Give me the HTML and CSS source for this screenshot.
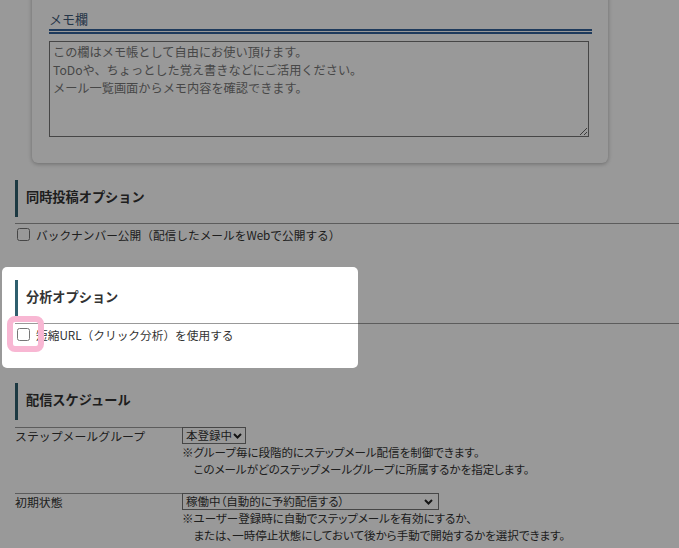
FILE: index.html
```html
<!DOCTYPE html>
<html lang="ja">
<head>
<meta charset="utf-8">
<title>配信設定</title>
<link rel="stylesheet" href="styles.css">
</head>
<body>
<main class="page">
  <div class="memo-card">
    <h3 class="memo-title">メモ欄</h3>
    <textarea class="memo">この欄はメモ帳として自由にお使い頂けます。
ToDoや、ちょっとした覚え書きなどにご活用ください。
メール一覧画面からメモ内容を確認できます。</textarea>
  </div>

  <section class="opt">
    <h2 class="sec-head">同時投稿オプション</h2>
    <hr class="sec-rule">
    <label class="check-row"><span class="cb"><input type="checkbox"></span>バックナンバー公開（配信したメールをWebで公開する）</label>
  </section>

  <section class="opt spotlight">
    <h2 class="sec-head">分析オプション</h2>
    <hr class="sec-rule">
    <label class="check-row"><span class="cb"><input type="checkbox"><span class="ring"></span></span>短縮URL（クリック分析）を使用する</label>
  </section>

  <section class="opt schedule">
    <h2 class="sec-head">配信スケジュール</h2>
    <table class="form">
      <tr>
        <th>ステップメールグループ</th>
        <td>
          <span class="sel sel-group"><select><option>本登録中</option></select><svg class="chev" width="9" height="6" viewBox="0 0 9 6"><polyline points="1,1 4.5,4.5 8,1" fill="none" stroke="#222" stroke-width="2"/></svg></span>
          <p class="note">※グループ毎に段階的にステップメール配信を制御できます。<br>　このメールがどのステップメールグループに所属するかを指定します。</p>
        </td>
      </tr>
      <tr>
        <th>初期状態</th>
        <td>
          <span class="sel sel-state"><select><option>稼働中（自動的に予約配信する）</option></select><svg class="chev" width="9" height="6" viewBox="0 0 9 6"><polyline points="1,1 4.5,4.5 8,1" fill="none" stroke="#222" stroke-width="2"/></svg></span>
          <p class="note">※ユーザー登録時に自動でステップメールを有効にするか、<br>　または、一時停止状態にしておいて後から手動で開始するかを選択できます。</p>
        </td>
      </tr>
    </table>
  </section>
</main>
</body>
</html>
```

FILE: styles.css
```css
html {
  overflow: hidden;
}

body {
  margin: 0;
  background: #fff;
  color: #333;
  font-family: "Noto Sans CJK JP", "Noto Sans", sans-serif;
  font-size: 12px;
}

.page {
  display: flex;
  flex-direction: column;
}

/* memo card */
.memo-card {
  margin: -20px 0 0 32px;
  width: 576px;
  box-sizing: border-box;
  padding: 29px 16px 26px 17px;
  background: #fff;
  border-radius: 6px;
  box-shadow: 0 1px 4px rgba(0, 0, 0, 0.3);
}

.memo-title {
  margin: 0;
  font-size: 13px;
  font-weight: normal;
  line-height: 20px;
  color: #3f5a78;
  border-bottom: 5px double #33629a;
}

.memo {
  display: block;
  margin-top: 7px;
  width: 540px;
  height: 96px;
  box-sizing: border-box;
  border: 1px solid #767676;
  padding: 1px 3px;
  font-family: "Noto Sans CJK JP", sans-serif;
  font-size: 12.2px;
  line-height: 18px;
  color: #777;
  resize: both;
}

/* option sections */
.opt {
  margin-left: 15px;
  margin-top: 35px;
}

.memo-card + .opt {
  margin-top: 17px;
}

.opt.schedule {
  margin-top: 38px;
}

.sec-head {
  margin: 0;
  height: 37px;
  box-sizing: border-box;
  border-left: 3px solid #2f5f6e;
  padding: 0 0 3px 8px;
  font-size: 13.2px;
  font-weight: bold;
  line-height: 34px;
  color: #333;
}

.sec-rule {
  margin: 6px 0 0;
  border: 0;
  border-top: 1px solid #999;
  height: 0;
}

.check-row {
  display: flex;
  align-items: center;
  height: 21px;
  font-size: 11.7px;
}

.cb {
  position: relative;
  display: inline-flex;
  margin: 0 6px 0 2px;
}

.cb input {
  margin: 0;
  width: 13px;
  height: 13px;
}

.ring {
  position: absolute;
  left: -10px;
  top: -12px;
  width: 37px;
  height: 36px;
  box-sizing: border-box;
  border: 6px solid #f8b7d3;
  border-radius: 8px;
  pointer-events: none;
}

/* spotlight overlay */
.spotlight {
  position: relative;
}

.spotlight::before {
  content: "";
  position: absolute;
  left: -13px;
  top: -13px;
  width: 356px;
  height: 101px;
  border-radius: 5px;
  box-shadow: 0 0 0 2400px rgba(0, 0, 0, 0.4);
  z-index: 10;
  pointer-events: none;
}

/* schedule table */
.schedule .sec-head {
  margin-bottom: 7px;
}

.form {
  border-collapse: separate;
  border-spacing: 0;
}

.form th {
  width: 167px;
  box-sizing: border-box;
  padding: 0;
  border-top: 1px solid #999;
  text-align: left;
  vertical-align: top;
  font-weight: normal;
  font-size: 11.9px;
  line-height: 15px;
}

.form td {
  padding: 0 0 15px;
  vertical-align: top;
}

.sel {
  display: flex;
  align-items: center;
  height: 17px;
  box-sizing: border-box;
  border: 1px solid #767676;
  background: #fff;
}

.sel select {
  flex: 1;
  min-width: 0;
  width: 0;
  -webkit-appearance: none;
  appearance: none;
  border: 0;
  background: transparent;
  padding: 0 0 0 3px;
  margin: 0;
  height: 15px;
  font-family: inherit;
  font-feature-settings: "palt";
  font-size: 11.5px;
  line-height: 15px;
  color: #333;
  outline: none;
}

.sel-group {
  width: 64px;
  padding-right: 3px;
}

.sel-state {
  width: 257px;
  padding-right: 5px;
}

.chev {
  flex: none;
}

.note {
  margin: 0;
  line-height: 17px;
  font-size: 11.5px;
  font-feature-settings: "palt";
  white-space: nowrap;
}
```
